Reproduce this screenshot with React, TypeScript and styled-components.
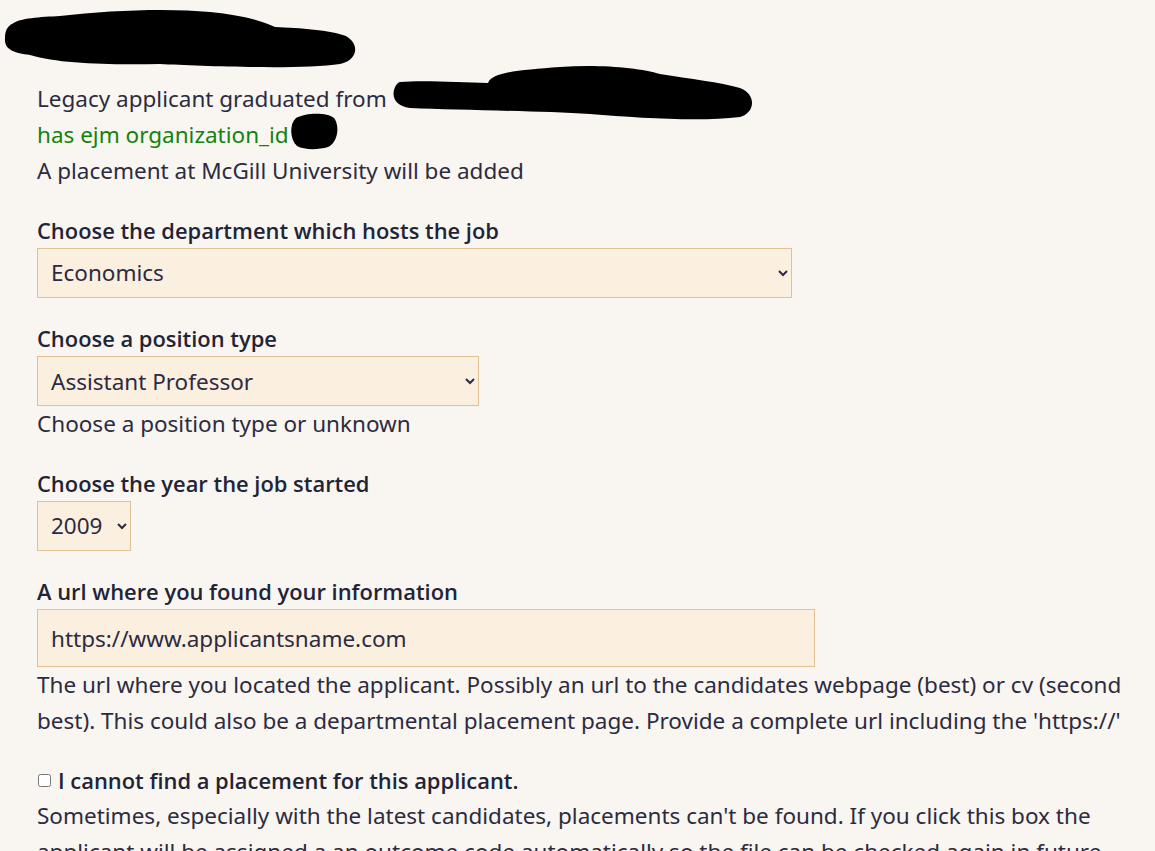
import React from "react";
import styled, { createGlobalStyle } from "styled-components";

const GlobalStyle = createGlobalStyle`
  html, body { margin: 0; padding: 0; background: #f9f6f1; }
  body {
    font-family: "Noto Sans", "Open Sans", sans-serif;
    color: #2c2b3f;
    font-size: 22.5px;
    line-height: 36px;
  }
`;

const Page = styled.div`
  position: relative;
  padding: 81px 20px 0 37px;
  min-height: 851px;
  box-sizing: border-box;
`;

const Redactions = styled.svg`
  position: absolute;
  top: 0;
  left: 0;
  width: 800px;
  height: 160px;
  pointer-events: none;
`;

const Intro = styled.div`
  display: flex;
  flex-direction: column;
  margin-bottom: 22.5px;
`;

const Line = styled.div<{ $tone?: "ok" }>`
  color: ${(p) => (p.$tone === "ok" ? "#12820f" : "inherit")};
`;

const Field = styled.div`
  display: flex;
  flex-direction: column;
  align-items: flex-start;
  margin-bottom: 22.5px;
`;

const Label = styled.label`
  font-family: "Open Sans", "Noto Sans", sans-serif;
  font-size: 21.9px;
  font-weight: 600;
  color: #222436;
  padding-top: 1px;
  line-height: 35px;
`;

const Select = styled.select<{ $w: number }>`
  width: ${(p) => p.$w}px;
  height: 50px;
  box-sizing: border-box;
  background: #fbefe0;
  border: 1px solid #dfc195;
  border-radius: 0;
  padding: 0 10px 0 9px;
  font-family: inherit;
  font-size: 22.5px;
  color: #2c2b3f;
`;

const Input = styled.input`
  width: 778px;
  height: 58px;
  box-sizing: border-box;
  background: #fbefe0;
  border: 1px solid #dfc195;
  border-radius: 0;
  padding: 0 13px;
  font-family: inherit;
  font-size: 22.5px;
  color: #2c2b3f;
`;

const Help = styled.div``;

const CheckRow = styled.label`
  display: flex;
  align-items: center;
  gap: 7px;
  font-family: "Open Sans", "Noto Sans", sans-serif;
  font-size: 21.9px;
  font-weight: 600;
  color: #222436;
  padding-top: 1px;
  line-height: 35px;
  input {
    margin: 0 0 0 1px;
    width: 13px;
    height: 13px;
  }
`;

export default function App() {
  return (
    <>
      <GlobalStyle />
      <Page>
        <Redactions viewBox="0 0 800 160">
          <path
            d="M12 24 C 20 18, 40 17, 60 16 C 110 10, 170 8, 210 12 C 240 15, 260 20, 275 27 C 300 28, 330 30, 346 36 C 360 44, 358 60, 340 64 C 300 70, 200 66, 160 64 C 110 65, 60 64, 30 55 C 14 53, 4 50, 5 38 C 5 30, 8 26, 12 24 Z"
            fill="#000"
          />
          <path
            d="M400 82 C 420 80, 460 82, 488 83 C 492 72, 520 70, 560 67 C 600 64, 640 68, 660 74 C 690 79, 720 82, 740 88 C 756 94, 756 112, 740 117 C 700 122, 640 118, 590 114 C 540 111, 460 110, 410 108 C 396 106, 392 98, 394 90 C 395 86, 397 83, 400 82 Z"
            fill="#000"
          />
          <path
            d="M296 118 C 306 113, 326 112, 334 118 C 340 126, 338 142, 328 147 C 318 150, 304 150, 297 146 C 290 140, 289 124, 296 118 Z"
            fill="#000"
          />
        </Redactions>
        <Intro>
          <Line>Legacy applicant graduated from</Line>
          <Line $tone="ok">has ejm organization_id</Line>
          <Line>A placement at McGill University will be added</Line>
        </Intro>

        <Field>
          <Label htmlFor="dept">Choose the department which hosts the job</Label>
          <Select id="dept" $w={755} defaultValue="Economics">
            <option>Economics</option>
            <option>Finance</option>
            <option>Business</option>
          </Select>
        </Field>

        <Field>
          <Label htmlFor="ptype">Choose a position type</Label>
          <Select id="ptype" $w={442} defaultValue="Assistant Professor">
            <option>Assistant Professor</option>
            <option>Associate Professor</option>
            <option>Unknown</option>
          </Select>
          <Help>Choose a position type or unknown</Help>
        </Field>

        <Field>
          <Label htmlFor="year">Choose the year the job started</Label>
          <Select id="year" $w={94} defaultValue="2009">
            <option>2008</option>
            <option>2009</option>
            <option>2010</option>
          </Select>
        </Field>

        <Field>
          <Label htmlFor="url">A url where you found your information</Label>
          <Input id="url" type="text" defaultValue="https://www.applicantsname.com" />
          <Help>
            The url where you located the applicant. Possibly an url to the candidates webpage (best) or cv (second
            best). This could also be a departmental placement page. Provide a complete url including the 'https://'
          </Help>
        </Field>

        <Field>
          <CheckRow>
            <input type="checkbox" />
            I cannot find a placement for this applicant.
          </CheckRow>
          <Help>
            Sometimes, especially with the latest candidates, placements can't be found. If you click this box the
            applicant will be assigned a an outcome code automatically so the file can be checked again in future.
          </Help>
        </Field>
      </Page>
    </>
  );
}
